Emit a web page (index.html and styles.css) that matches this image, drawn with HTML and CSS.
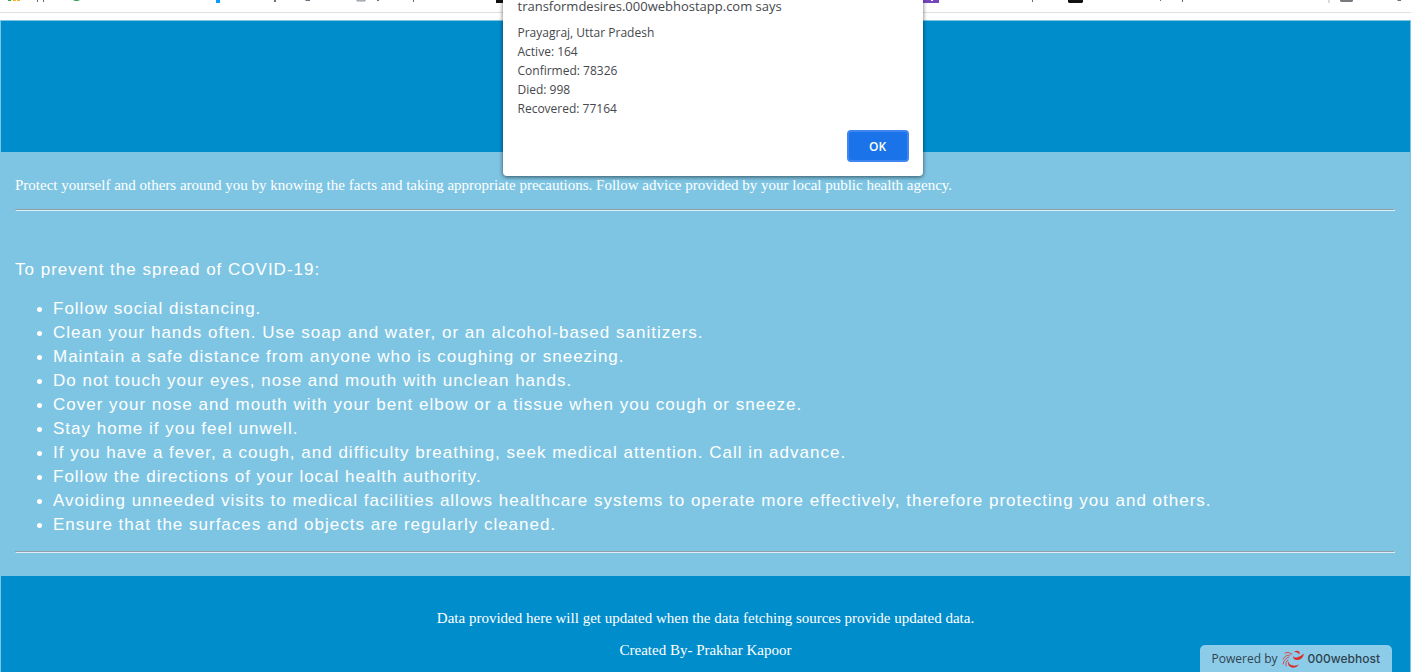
FILE: index.html
```html
<!DOCTYPE html>
<html lang="en">
<head>
<meta charset="utf-8">
<title>COVID-19 Tracker</title>
<link rel="stylesheet" href="styles.css">
</head>
<body>
<div class="bookmarks" aria-hidden="true">
  <svg class="marks" width="1411" height="4" viewBox="0 0 1411 4">
    <path fill="#34a853" d="M8 0h3v1H8z"/>
    <path fill="#fbb51b" d="M13 0h3v1h-3zM17 0h3v1h-3z"/>
    <path fill="#6b7080" d="M37 0h1v2h-1zM43 0h1v2h-1zM274 0h2v2h-2zM305 0h5v1h-4zM377 0h2v1h-2zM413 0h1v2h-1zM1032 0h1v2h-1zM1160 0h1v1h-1zM1182 0h1v2h-1zM1397 0h4v1h-3z"/>
    <path fill="#34a853" d="M73 0h7l-2 1h-3z"/>
    <path fill="#0a9bff" d="M216 0h4v3h-4z"/>
    <path fill="#c7ccd3" stroke="#8f959d" stroke-width="1" d="M357 -2h8v3h-8z"/>
    <path fill="#111" d="M496 0h8v3h-8zM1068 0h15v2l-1 1h-13l-1-1z"/>
    <path fill="#7446bd" d="M923 0h16v3h-16z"/>
    <path fill="#fff" d="M931 0h2v1h-2z"/>
    <path fill="#dadce0" d="M1328 0h2v3h-2z"/>
    <path fill="#777b80" d="M1340 0h13v1l-1 1h-11l-1-1z"/>
  </svg>
</div>
<div class="page">
  <header class="banner"></header>
  <main class="content">
    <p class="intro">Protect yourself and others around you by knowing the facts and taking appropriate precautions. Follow advice provided by your local public health agency.</p>
    <hr class="rule">
    <section class="advice">
      <p class="lead">To prevent the spread of COVID-19:</p>
      <ul class="tips">
        <li>Follow social distancing.</li>
        <li>Clean your hands often. Use soap and water, or an alcohol-based sanitizers.</li>
        <li>Maintain a safe distance from anyone who is coughing or sneezing.</li>
        <li>Do not touch your eyes, nose and mouth with unclean hands.</li>
        <li>Cover your nose and mouth with your bent elbow or a tissue when you cough or sneeze.</li>
        <li>Stay home if you feel unwell.</li>
        <li>If you have a fever, a cough, and difficulty breathing, seek medical attention. Call in advance.</li>
        <li>Follow the directions of your local health authority.</li>
        <li>Avoiding unneeded visits to medical facilities allows healthcare systems to operate more effectively, therefore protecting you and others.</li>
        <li>Ensure that the surfaces and objects are regularly cleaned.</li>
      </ul>
    </section>
    <hr class="rule">
  </main>
  <footer class="footer">
    <p>Data provided here will get updated when the data fetching sources provide updated data.</p>
    <p>Created By- Prakhar Kapoor</p>
  </footer>
</div>
<div class="dialog" role="alertdialog" aria-labelledby="dialog-title" aria-describedby="dialog-text">
  <h1 class="dialog-title" id="dialog-title">transformdesires.000webhostapp.com says</h1>
  <p class="dialog-text" id="dialog-text">Prayagraj, Uttar Pradesh<br>Active: 164<br>Confirmed: 78326<br>Died: 998<br>Recovered: 77164</p>
  <button class="ok" type="button">OK</button>
</div>
<a class="host" href="#">
  <span>Powered by</span>
  <svg width="22" height="20" viewBox="0 0 22 20" aria-hidden="true">
    <g fill="#dc2b2b">
      <path d="M11 7Q12 9 15 8.500Q18 8 22 4.500Q21 10 16 11Q11 11.500 11 7z"/>
      <path d="M6 12Q7 16 11 16.500Q14 17 17 15.500Q14 19.500 10 18.500Q5 17 6 12z"/>
      <path d="M12 3Q16 0 18 4L17 5Q15 2.500 12 3z"/>
    </g>
    <g fill="none" stroke="#d94b4d" stroke-width="1" stroke-linecap="round">
      <path d="M10 5Q6 2 3 4"/>
      <path d="M8 6Q3 6 1 10"/>
      <path d="M7 8Q2 10 1 15"/>
      <path d="M6 11Q3 13 4 17"/>
    </g>
  </svg>
  <strong>000webhost</strong>
</a>
</body>
</html>
```
FILE: styles.css
```css
* {
  box-sizing: border-box;
}

body {
  display: flex;
  flex-direction: column;
  position: relative;
  min-height: 100vh;
  margin: 0;
  background: #fff;
  overflow-x: hidden;
  font-family: "Liberation Serif", "Times New Roman", serif;
  font-size: 15px;
  color: #fff;
}

.bookmarks {
  height: 13px;
  border-bottom: 1px solid #dfe0e2;
  overflow: hidden;
}

.marks {
  display: block;
}

.page {
  display: flex;
  flex: 1;
  flex-direction: column;
  margin-top: 7px;
  border: 1px solid #7ec5e3;
  border-bottom: 0;
  background: #008dcc;
}

.banner {
  height: 131px;
}

.content {
  padding: 24px 15px 23px 14px;
  background: #7ec5e3;
}

.intro {
  margin: 0 0 15px;
  line-height: 18px;
}

.rule {
  height: 2px;
  margin: 0;
  border: 1px solid;
  border-color: #8fa0a8 #dceef7 #dceef7 #8fa0a8;
}

.advice {
  padding: 47px 0 14px;
  font-family: "Liberation Sans", Arial, sans-serif;
  font-size: 17px;
  line-height: 24px;
  letter-spacing: 1px;
}

.lead {
  margin: 0 0 15px;
}

.tips {
  margin: 0;
  padding-left: 38px;
}

.tips li::marker {
  font-size: 15px;
}

.footer {
  display: flex;
  flex-direction: column;
  gap: 14px;
  padding: 33px 16px 12px;
  line-height: 18px;
  text-align: center;
}

.footer p {
  margin: 0;
}

.dialog {
  position: absolute;
  top: 0;
  left: calc(50% - 203px);
  display: flex;
  flex-direction: column;
  width: 420px;
  padding: 0 14px 14px 15px;
  border-radius: 0 0 4px 4px;
  background: #fff;
  box-shadow: 0 1px 4px rgba(0, 0, 0, 0.6);
  font-family: "Open Sans", sans-serif;
  color: #45484c;
}

.dialog-title {
  margin: 0 0 11px;
  font-size: 13px;
  font-weight: 400;
  line-height: 12px;
}

.dialog-text {
  margin: 0;
  font-size: 12px;
  line-height: 19px;
}

.ok {
  align-self: flex-end;
  width: 62px;
  height: 32px;
  margin-top: 12px;
  border: 2px solid #3f86f0;
  border-radius: 4px;
  background: #1a73e8;
  font: 600 12px "Open Sans", sans-serif;
  color: #fff;
}

.host {
  position: absolute;
  right: 19px;
  bottom: 0;
  display: flex;
  align-items: center;
  gap: 4px;
  height: 27px;
  padding: 0 12px;
  border-radius: 5px 5px 0 0;
  background: #8dcce8;
  font: 12px "Open Sans", sans-serif;
  color: #2d4350;
  text-decoration: none;
}

.host strong {
  font: 500 12px Inter, sans-serif;
}
```
